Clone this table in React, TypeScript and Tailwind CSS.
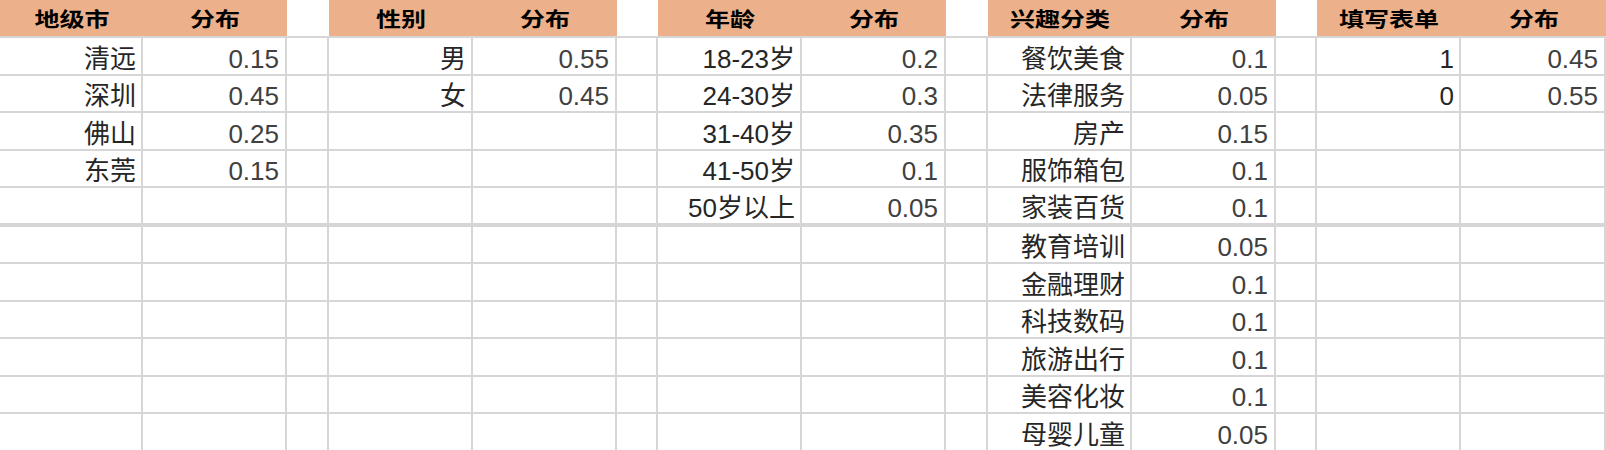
import React from "react";

const groups: { title: string; rows: [string, string][] }[] = [
  { title: "地级市", rows: [["清远", "0.15"], ["深圳", "0.45"], ["佛山", "0.25"], ["东莞", "0.15"]] },
  { title: "性别", rows: [["男", "0.55"], ["女", "0.45"]] },
  {
    title: "年龄",
    rows: [["18-23岁", "0.2"], ["24-30岁", "0.3"], ["31-40岁", "0.35"], ["41-50岁", "0.1"], ["50岁以上", "0.05"]],
  },
  {
    title: "兴趣分类",
    rows: [
      ["餐饮美食", "0.1"], ["法律服务", "0.05"], ["房产", "0.15"], ["服饰箱包", "0.1"], ["家装百货", "0.1"],
      ["教育培训", "0.05"], ["金融理财", "0.1"], ["科技数码", "0.1"], ["旅游出行", "0.1"], ["美容化妆", "0.1"],
      ["母婴儿童", "0.05"],
    ],
  },
  { title: "填写表单", rows: [["1", "0.45"], ["0", "0.55"]] },
];

const ROWS = 11;
const font = { fontFamily: '"Liberation Sans", "Noto Sans CJK SC", sans-serif' };

function rowHeightClass(i: number) {
  return i === 4 ? "h-[38.5px] border-b-4" : "h-[37.5px] border-b-2";
}

export default function App() {
  const cells: React.ReactNode[] = [];
  groups.forEach((g, gi) => {
    cells.push(
      <div key={`h${gi}a`} className="h-[38px] bg-[#ecb08a] border-b-2 border-b-[#d6d6d6] flex items-center justify-center pt-[3px]">
        <span className="inline-block text-[20px] font-bold text-black scale-x-125">{g.title}</span>
      </div>
    );
    cells.push(
      <div key={`h${gi}b`} className="h-[38px] bg-[#ecb08a] border-b-2 border-b-[#d6d6d6] flex items-center justify-center pt-[3px]">
        <span className="inline-block text-[20px] font-bold text-black scale-x-125">分布</span>
      </div>
    );
    if (gi < groups.length - 1) {
      cells.push(<div key={`h${gi}s`} className="h-[38px] bg-white border-b-2 border-b-[#d6d6d6]" />);
    }
  });
  for (let r = 0; r < ROWS; r++) {
    groups.forEach((g, gi) => {
      const row = g.rows[r];
      const hc = rowHeightClass(r);
      cells.push(
        <div
          key={`r${r}g${gi}a`}
          className={`${hc} border-r-2 border-[#d6d6d6] flex items-end justify-end pr-[5px] text-[26px] leading-[30px] text-[#262626] whitespace-nowrap`}
        >
          {row ? row[0] : ""}
        </div>
      );
      cells.push(
        <div
          key={`r${r}g${gi}b`}
          className={`${hc} border-r-2 border-[#d6d6d6] flex items-end justify-end pr-[6px] text-[26px] leading-[30px] text-[#404040] whitespace-nowrap`}
        >
          {row ? row[1] : ""}
        </div>
      );
      if (gi < groups.length - 1) {
        cells.push(<div key={`r${r}g${gi}s`} className={`${hc} border-r-2 border-[#d6d6d6]`} />);
      }
    });
  }
  return (
    <div className="w-[1606px] h-[450px] overflow-hidden bg-white" style={font}>
      <div className="grid grid-cols-[143px_144px_42px_144px_144px_41px_144px_144px_42px_144px_144px_41px_144px_145px]">
        {cells}
      </div>
    </div>
  );
}
